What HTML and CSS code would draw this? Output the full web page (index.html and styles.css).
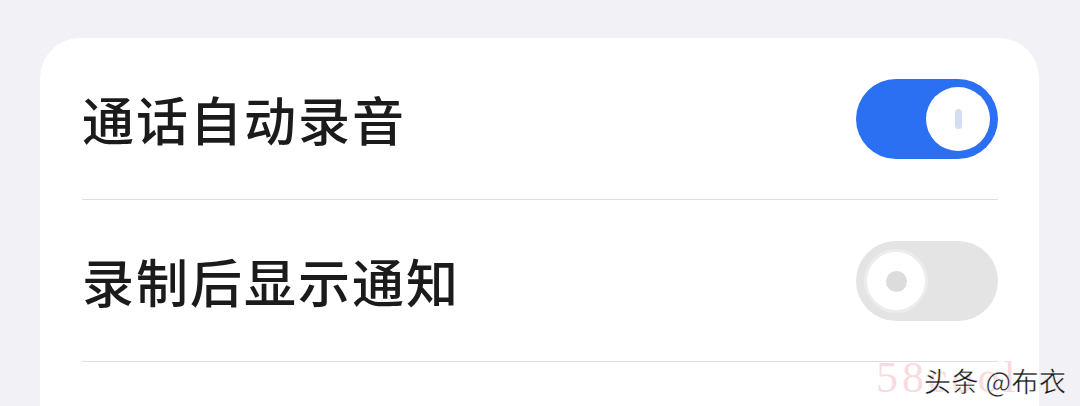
FILE: index.html
```html
<!DOCTYPE html>
<html lang="zh-CN">
<head>
  <meta charset="UTF-8">
  <title>通话录音设置</title>
  <meta name="viewport" content="width=device-width, initial-scale=1.0" />
  <link rel="stylesheet" href="styles.css">
</head>
<body>

  <div class="settings-card">
    <div class="setting-row">
      <span class="setting-label">通话自动录音</span>
      <div class="switch on">
        <div class="knob"><span class="mark-line"></span></div>
      </div>
    </div>

    <div class="setting-row">
      <span class="setting-label">录制后显示通知</span>
      <div class="switch off">
        <div class="knob"><span class="mark-dot"></span></div>
      </div>
    </div>
  </div>

  <div class="watermark">
    <span class="wm-site">58cool</span>
    <span class="wm-author">头条 @布衣</span>
  </div>

</body>
</html>
```

FILE: styles.css
```css
:root {
  --page-bg: #f1f1f6;
  --card-bg: #ffffff;
  --text: #1b1b1b;
  --divider: #dedede;
  --blue: #2b6ff3;
  --track-off: #e4e4e4;
  --font-main: "Noto Sans CJK SC", "Noto Sans", sans-serif;
}

body {
  margin: 0;
  height: 406px;
  overflow: hidden;
  background: var(--page-bg);
  font-family: var(--font-main);
  position: relative;
}

.settings-card {
  margin: 38px 0 0 40px;
  width: 999px;
  height: 368px;
  background: var(--card-bg);
  border-radius: 40px 40px 0 0;
  padding: 0 41px 0 42px;
  box-sizing: border-box;
}

.setting-row {
  display: flex;
  align-items: center;
  justify-content: space-between;
  padding: 41px 0 40px;
  border-bottom: 1px solid var(--divider);
}

.setting-label {
  font-size: 52px;
  font-weight: 500;
  color: var(--text);
  line-height: 80px;
  letter-spacing: 2px;
}

.switch {
  width: 142px;
  height: 80px;
  border-radius: 40px;
  display: flex;
  align-items: center;
  padding: 0 8px;
  box-sizing: border-box;
}

.switch.on {
  background: var(--blue);
  justify-content: flex-end;
}

.switch.off {
  background: var(--track-off);
  justify-content: flex-start;
}

.knob {
  width: 64px;
  height: 64px;
  border-radius: 50%;
  background: #ffffff;
  display: flex;
  align-items: center;
  justify-content: center;
  box-sizing: border-box;
}

.switch.off .knob {
  border: 3px solid #ececec;
}

.mark-line {
  width: 7px;
  height: 20px;
  border-radius: 4px;
  background: #d3def2;
}

.mark-dot {
  width: 21px;
  height: 21px;
  border-radius: 50%;
  background: #dcdcdc;
}

.watermark {
  position: absolute;
  left: 876px;
  top: 352px;
  height: 50px;
  display: flex;
  align-items: center;
}

.wm-site {
  font-family: "Liberation Serif", serif;
  font-size: 44px;
  color: rgba(240, 150, 160, 0.35);
  letter-spacing: 4px;
}

.wm-author {
  position: absolute;
  left: 48px;
  top: 9px;
  font-size: 27px;
  letter-spacing: 0.5px;
  color: #1a1a1a;
  white-space: nowrap;
  -webkit-text-stroke: 0.4px #ffffff;
  text-shadow: 0 0 2px #ffffff;
}
```
